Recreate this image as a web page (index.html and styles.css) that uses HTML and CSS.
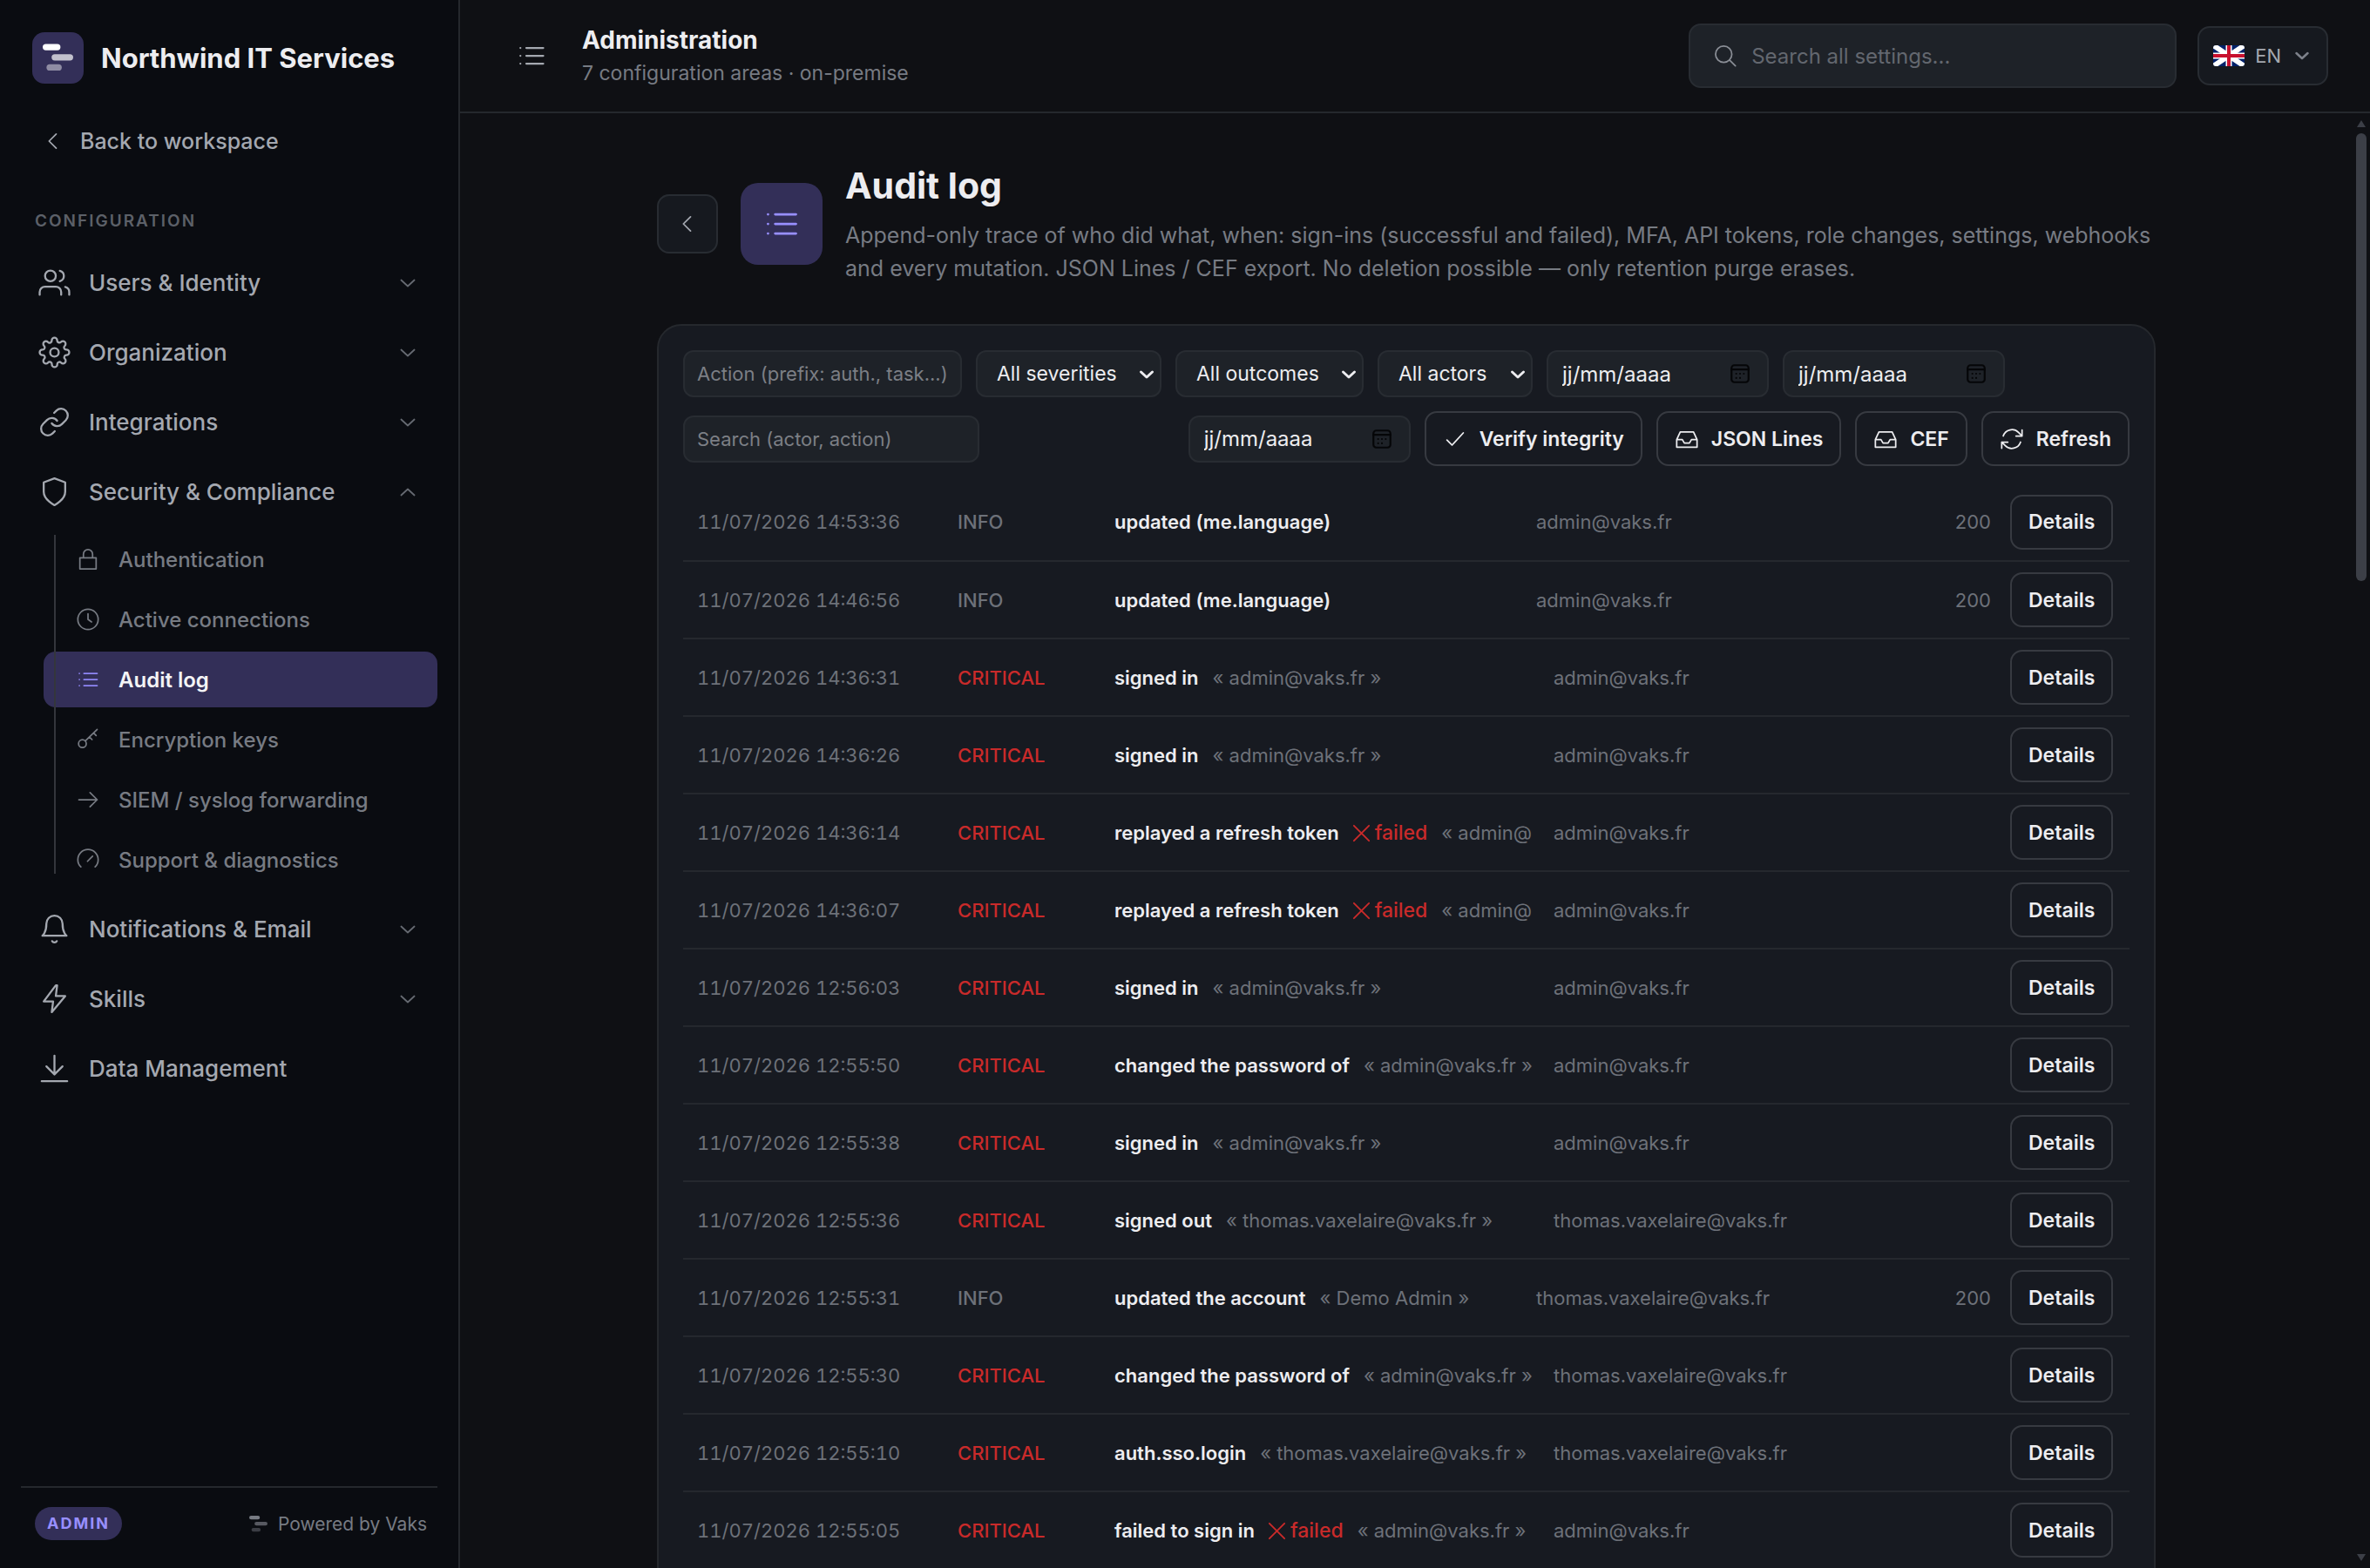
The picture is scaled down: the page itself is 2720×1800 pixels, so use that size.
FILE: index.html
```html
<!DOCTYPE html>
<html lang="en">
<head>
    <meta charset="UTF-8">
    <meta name="viewport" content="width=device-width, initial-scale=1.0">
    <title>Audit log - Administration</title>
    <link rel="stylesheet" href="styles.css">
</head>
<body>
    <!-- icon set -->
    <svg class="sprite" aria-hidden="true">
        <symbol id="i-logo" viewBox="0 0 24 24">
            <rect x="0" y="1" width="14" height="5" rx="2.5" />
            <rect x="7" y="9" width="17" height="5" rx="2.5" opacity=".7" />
            <rect x="3" y="17" width="12" height="5" rx="2.5" opacity=".45" />
        </symbol>
        <symbol id="i-left" viewBox="0 0 24 24"><path d="M15 5l-7 7 7 7" /></symbol>
        <symbol id="i-down" viewBox="0 0 24 24"><path d="M5.500 9l6.500 6 6.500-6" /></symbol>
        <symbol id="i-up" viewBox="0 0 24 24"><path d="M5.500 15l6.500-6 6.500 6" /></symbol>
        <symbol id="i-list" viewBox="0 0 24 24"><path d="M8 6h13M8 12h13M8 18h13M3.500 6h.01M3.500 12h.01M3.500 18h.01" /></symbol>
        <symbol id="i-users" viewBox="0 0 24 24"><path d="M17 21v-2a4 4 0 0 0-4-4H5a4 4 0 0 0-4 4v2M23 21v-2a4 4 0 0 0-3-3.870M16 3.130a4 4 0 0 1 0 7.750" /><circle cx="9" cy="7" r="4" /></symbol>
        <symbol id="i-gear" viewBox="0 0 24 24"><circle cx="12" cy="12" r="3.200" /><path d="M19.400 15a1.650 1.650 0 0 0 .33 1.820l.06.06a2 2 0 1 1-2.830 2.830l-.06-.06a1.650 1.650 0 0 0-2.820 1.170V21a2 2 0 0 1-4 0v-.09A1.650 1.650 0 0 0 7.180 19.700l-.06.06a2 2 0 1 1-2.830-2.830l.06-.06A1.650 1.650 0 0 0 3.090 14H3a2 2 0 0 1 0-4h.09A1.650 1.650 0 0 0 4.300 7.180l-.06-.06a2 2 0 1 1 2.830-2.830l.06.06A1.650 1.650 0 0 0 10 3.090V3a2 2 0 0 1 4 0v.09a1.650 1.650 0 0 0 2.820 1.210l.06-.06a2 2 0 1 1 2.830 2.830l-.06.06A1.650 1.650 0 0 0 20.910 10H21a2 2 0 0 1 0 4h-.09a1.650 1.650 0 0 0-1.510 1z" /></symbol>
        <symbol id="i-link" viewBox="0 0 24 24"><path d="M10 13a5 5 0 0 0 7.540.54l3-3a5 5 0 0 0-7.070-7.070l-1.720 1.710M14 11a5 5 0 0 0-7.540-.54l-3 3a5 5 0 0 0 7.070 7.070l1.710-1.710" /></symbol>
        <symbol id="i-shield" viewBox="0 0 24 24"><path d="M12 22s8-4 8-10V5l-8-3-8 3v7c0 6 8 10 8 10z" /></symbol>
        <symbol id="i-lock" viewBox="0 0 24 24"><path d="M4 10.500h16v11H4zM7.500 10.500V7a4.500 4.500 0 0 1 9 0v3.500" /></symbol>
        <symbol id="i-clock" viewBox="0 0 24 24"><circle cx="12" cy="12" r="10" /><path d="M12 6.500V12l3.500 2.500" /></symbol>
        <symbol id="i-key" viewBox="0 0 24 24"><circle cx="6.500" cy="16" r="3.800" /><path d="M9.300 13.300L21 2M17.500 5.500l2.500 2.500M13.500 9.500l2.500 2.500" /></symbol>
        <symbol id="i-right" viewBox="0 0 24 24"><path d="M3 12h18M14 5l7 7-7 7" /></symbol>
        <symbol id="i-gauge" viewBox="0 0 24 24"><path d="M5 19a10 10 0 1 1 14 0M11.500 13.500l5-5" /></symbol>
        <symbol id="i-bell" viewBox="0 0 24 24"><path d="M18 8A6 6 0 0 0 6 8c0 7-3 9-3 9h18s-3-2-3-9M13.730 21a2 2 0 0 1-3.460 0" /></symbol>
        <symbol id="i-bolt" viewBox="0 0 24 24"><path d="M13 2L4 14h7l-1 8 10-12h-7l1-8z" /></symbol>
        <symbol id="i-download" viewBox="0 0 24 24"><path d="M12 2.500V16M6 10.500l6 6 6-6M2.500 21.500h19" /></symbol>
        <symbol id="i-search" viewBox="0 0 24 24"><circle cx="10.500" cy="10.500" r="8" /><path d="M22 22l-5.800-5.800" /></symbol>
        <symbol id="i-check" viewBox="0 0 24 24"><path d="M4 13l5 5L20 6" /></symbol>
        <symbol id="i-inbox" viewBox="0 0 24 24"><path d="M2 12.500h5.500l2 3.500h5l2-3.500H22M5.500 5h13L22 12.500V20H2v-7.500z" /></symbol>
        <symbol id="i-refresh" viewBox="0 0 24 24"><path d="M22 3v6h-6M2 21v-6h6M3.500 9a9 9 0 0 1 15-3.500L22 9M2 15l3.500 3.500a9 9 0 0 0 15-3.500" /></symbol>
        <symbol id="i-cross" viewBox="0 0 24 24"><path d="M3 3l18 18M21 3L3 21" /></symbol>
        <symbol id="i-calendar" viewBox="0 0 24 24"><rect x="3" y="3" width="18" height="18" rx="3" /><path d="M3 7.500h18M8 12h.01M12 12h.01M16 12h.01M8 16.500h.01M12 16.500h.01" /></symbol>
    </svg>

    <div class="app">
        <aside class="sidebar">
            <div class="brand">
                <span class="brand-logo"><svg><use href="#i-logo" /></svg></span>
                <span>Northwind IT Services</span>
            </div>
            <a class="back-link" href="#"><svg class="icon"><use href="#i-left" /></svg>Back to workspace</a>
            <div class="nav-title">CONFIGURATION</div>
            <nav class="nav">
                <button class="nav-item"><svg class="icon"><use href="#i-users" /></svg>Users &amp; Identity<svg class="icon chevron"><use href="#i-down" /></svg></button>
                <button class="nav-item"><svg class="icon"><use href="#i-gear" /></svg>Organization<svg class="icon chevron"><use href="#i-down" /></svg></button>
                <button class="nav-item"><svg class="icon"><use href="#i-link" /></svg>Integrations<svg class="icon chevron"><use href="#i-down" /></svg></button>
                <button class="nav-item"><svg class="icon"><use href="#i-shield" /></svg>Security &amp; Compliance<svg class="icon chevron"><use href="#i-up" /></svg></button>
                <div class="subnav">
                    <a href="#"><svg class="icon"><use href="#i-lock" /></svg>Authentication</a>
                    <a href="#"><svg class="icon"><use href="#i-clock" /></svg>Active connections</a>
                    <a href="#" class="active"><svg class="icon"><use href="#i-list" /></svg>Audit log</a>
                    <a href="#"><svg class="icon"><use href="#i-key" /></svg>Encryption keys</a>
                    <a href="#"><svg class="icon"><use href="#i-right" /></svg>SIEM / syslog forwarding</a>
                    <a href="#"><svg class="icon"><use href="#i-gauge" /></svg>Support &amp; diagnostics</a>
                </div>
                <button class="nav-item"><svg class="icon"><use href="#i-bell" /></svg>Notifications &amp; Email<svg class="icon chevron"><use href="#i-down" /></svg></button>
                <button class="nav-item"><svg class="icon"><use href="#i-bolt" /></svg>Skills<svg class="icon chevron"><use href="#i-down" /></svg></button>
                <a class="nav-item" href="#"><svg class="icon"><use href="#i-download" /></svg>Data Management</a>
            </nav>
            <div class="sidebar-footer">
                <span class="role">ADMIN</span>
                <span class="powered"><svg><use href="#i-logo" /></svg>Powered by Vaks</span>
            </div>
        </aside>

        <div class="main">
            <header class="topbar">
                <svg class="icon topbar-icon"><use href="#i-list" /></svg>
                <div class="topbar-text">
                    <div class="topbar-title">Administration</div>
                    <div class="topbar-sub">7 configuration areas · on-premise</div>
                </div>
                <label class="search">
                    <svg class="icon"><use href="#i-search" /></svg>
                    <input type="text" placeholder="Search all settings..." aria-label="Search all settings">
                </label>
                <button class="lang">
                    <svg class="flag" viewBox="0 0 36 24">
                        <rect width="36" height="24" fill="#012169" />
                        <path d="M0 0l36 24M36 0L0 24" stroke="#fff" stroke-width="6" />
                        <path d="M18 0v24M0 12h36" stroke="#fff" stroke-width="7" />
                        <path d="M18 0v24M0 12h36" stroke="#c8102e" stroke-width="4" />
                    </svg>
                    EN
                    <svg class="icon"><use href="#i-down" /></svg>
                </button>
            </header>

            <div class="scroll">
                <main class="content">
                    <div class="page-head">
                        <button class="back-btn" aria-label="Back"><svg class="icon"><use href="#i-left" /></svg></button>
                        <span class="page-icon"><svg class="icon"><use href="#i-list" /></svg></span>
                        <div>
                            <h1>Audit log</h1>
                            <p>Append-only trace of who did what, when: sign-ins (successful and failed), MFA, API tokens, role changes, settings, webhooks<br>and every mutation. JSON Lines / CEF export. No deletion possible — only retention purge erases.</p>
                        </div>
                    </div>

                    <section class="card">
                        <div class="filters">
                            <input class="field field-action" type="text" placeholder="Action (prefix: auth., task...)" aria-label="Action">
                            <span class="select select-severity"><select aria-label="Severity"><option>All severities</option></select><svg class="icon"><use href="#i-down" /></svg></span>
                            <span class="select select-outcome"><select aria-label="Outcome"><option>All outcomes</option></select><svg class="icon"><use href="#i-down" /></svg></span>
                            <span class="select select-actor"><select aria-label="Actor"><option>All actors</option></select><svg class="icon"><use href="#i-down" /></svg></span>
                            <label class="date"><input type="text" value="jj/mm/aaaa" aria-label="From"><svg class="icon"><use href="#i-calendar" /></svg></label>
                            <label class="date"><input type="text" value="jj/mm/aaaa" aria-label="To"><svg class="icon"><use href="#i-calendar" /></svg></label>
                            <input class="field field-search" type="text" placeholder="Search (actor, action)" aria-label="Search">
                            <label class="date date-verify"><input type="text" value="jj/mm/aaaa" aria-label="Verify from"><svg class="icon"><use href="#i-calendar" /></svg></label>
                            <button class="btn"><svg class="icon"><use href="#i-check" /></svg>Verify integrity</button>
                            <button class="btn"><svg class="icon"><use href="#i-inbox" /></svg>JSON Lines</button>
                            <button class="btn"><svg class="icon"><use href="#i-inbox" /></svg>CEF</button>
                            <button class="btn"><svg class="icon"><use href="#i-refresh" /></svg>Refresh</button>
                        </div>

                        <table class="log">
                            <colgroup><col class="c-date"><col class="c-level"><col class="c-action"><col><col class="c-status"><col class="c-more"></colgroup>
                            <tbody>
                                <tr class="info"><td>11/07/2026 14:53:36</td><td class="level">INFO</td><td><b>updated (me.language)</b></td><td class="actor">admin@vaks.fr</td><td class="status">200</td><td><button class="btn">Details</button></td></tr>
                                <tr class="info"><td>11/07/2026 14:46:56</td><td class="level">INFO</td><td><b>updated (me.language)</b></td><td class="actor">admin@vaks.fr</td><td class="status">200</td><td><button class="btn">Details</button></td></tr>
                                <tr class="critical"><td>11/07/2026 14:36:31</td><td class="level">CRITICAL</td><td><b>signed in</b><span class="target">« admin@vaks.fr »</span></td><td class="actor">admin@vaks.fr</td><td></td><td><button class="btn">Details</button></td></tr>
                                <tr class="critical"><td>11/07/2026 14:36:26</td><td class="level">CRITICAL</td><td><b>signed in</b><span class="target">« admin@vaks.fr »</span></td><td class="actor">admin@vaks.fr</td><td></td><td><button class="btn">Details</button></td></tr>
                                <tr class="critical"><td>11/07/2026 14:36:14</td><td class="level">CRITICAL</td><td><b>replayed a refresh token</b><span class="failed"><svg class="icon"><use href="#i-cross" /></svg>failed</span><span class="target">« admin@</span></td><td class="actor">admin@vaks.fr</td><td></td><td><button class="btn">Details</button></td></tr>
                                <tr class="critical"><td>11/07/2026 14:36:07</td><td class="level">CRITICAL</td><td><b>replayed a refresh token</b><span class="failed"><svg class="icon"><use href="#i-cross" /></svg>failed</span><span class="target">« admin@</span></td><td class="actor">admin@vaks.fr</td><td></td><td><button class="btn">Details</button></td></tr>
                                <tr class="critical"><td>11/07/2026 12:56:03</td><td class="level">CRITICAL</td><td><b>signed in</b><span class="target">« admin@vaks.fr »</span></td><td class="actor">admin@vaks.fr</td><td></td><td><button class="btn">Details</button></td></tr>
                                <tr class="critical"><td>11/07/2026 12:55:50</td><td class="level">CRITICAL</td><td><b>changed the password of</b><span class="target">« admin@vaks.fr »</span></td><td class="actor">admin@vaks.fr</td><td></td><td><button class="btn">Details</button></td></tr>
                                <tr class="critical"><td>11/07/2026 12:55:38</td><td class="level">CRITICAL</td><td><b>signed in</b><span class="target">« admin@vaks.fr »</span></td><td class="actor">admin@vaks.fr</td><td></td><td><button class="btn">Details</button></td></tr>
                                <tr class="critical"><td>11/07/2026 12:55:36</td><td class="level">CRITICAL</td><td><b>signed out</b><span class="target">« thomas.vaxelaire@vaks.fr »</span></td><td class="actor">thomas.vaxelaire@vaks.fr</td><td></td><td><button class="btn">Details</button></td></tr>
                                <tr class="info"><td>11/07/2026 12:55:31</td><td class="level">INFO</td><td><b>updated the account</b><span class="target">« Demo Admin »</span></td><td class="actor">thomas.vaxelaire@vaks.fr</td><td class="status">200</td><td><button class="btn">Details</button></td></tr>
                                <tr class="critical"><td>11/07/2026 12:55:30</td><td class="level">CRITICAL</td><td><b>changed the password of</b><span class="target">« admin@vaks.fr »</span></td><td class="actor">thomas.vaxelaire@vaks.fr</td><td></td><td><button class="btn">Details</button></td></tr>
                                <tr class="critical"><td>11/07/2026 12:55:10</td><td class="level">CRITICAL</td><td><b>auth.sso.login</b><span class="target">« thomas.vaxelaire@vaks.fr »</span></td><td class="actor">thomas.vaxelaire@vaks.fr</td><td></td><td><button class="btn">Details</button></td></tr>
                                <tr class="critical"><td>11/07/2026 12:55:05</td><td class="level">CRITICAL</td><td><b>failed to sign in</b><span class="failed"><svg class="icon"><use href="#i-cross" /></svg>failed</span><span class="target">« admin@vaks.fr »</span></td><td class="actor">admin@vaks.fr</td><td></td><td><button class="btn">Details</button></td></tr>
                            </tbody>
                        </table>
                    </section>
                </main>
                <div class="scrollbar"><i class="arrow-up"></i><i class="thumb"></i><i class="arrow-down"></i></div>
            </div>
        </div>
    </div>
</body>
</html>
```
FILE: styles.css
```css
* {
    box-sizing: border-box;
}

body {
    margin: 0;
    background-color: #0f1014;
    color: #ededf0;
    font-family: Inter, "Liberation Sans", sans-serif;
    font-size: 22px;
}

button, input, select {
    font: inherit;
    color: inherit;
}

button {
    cursor: pointer;
}

a {
    color: inherit;
    text-decoration: none;
}

.sprite {
    display: none;
}

.icon {
    flex: none;
    width: 28px;
    height: 28px;
    fill: none;
    stroke: currentColor;
    stroke-width: 1.5;
    stroke-linecap: round;
    stroke-linejoin: round;
}

.app {
    display: flex;
    height: 100vh;
    overflow: hidden;
}

/* sidebar */
.sidebar {
    display: flex;
    flex-direction: column;
    flex: none;
    width: 528px;
    padding: 36px 24px 24px;
    background-color: #0a0c11;
    border-right: 2px solid #25282d;
    color: #a4a8b0;
}

.brand {
    display: flex;
    align-items: center;
    gap: 20px;
    height: 60px;
    padding-left: 13px;
    color: #ededf0;
    font-size: 31px;
    font-weight: 700;
}

.brand-logo {
    display: flex;
    align-items: center;
    justify-content: center;
    width: 59px;
    height: 59px;
    border-radius: 14px;
    background-color: #332f58;
}

.brand-logo svg {
    width: 35px;
    height: 35px;
    fill: #fff;
}

.back-link {
    display: flex;
    align-items: center;
    gap: 17px;
    height: 64px;
    margin-top: 34px;
    padding-left: 23px;
    font-size: 25px;
    font-weight: 500;
}

.nav-title {
    margin: 46px 0 19px;
    padding-left: 16px;
    color: #5c6068;
    font-size: 19px;
    font-weight: 600;
    line-height: 28px;
    letter-spacing: 2px;
}

.nav {
    display: flex;
    flex-direction: column;
    flex: 1;
    gap: 5px;
}

.nav-item {
    display: flex;
    align-items: center;
    gap: 21px;
    height: 75px;
    padding: 0 20px;
    border: 0;
    background: none;
    font-size: 26px;
    font-weight: 500;
    text-align: left;
}

.nav-item .icon {
    width: 37px;
    height: 37px;
}

.nav-item .chevron {
    width: 28px;
    height: 28px;
    margin-left: auto;
    color: #666a72;
}

.subnav {
    position: relative;
    display: flex;
    flex-direction: column;
    gap: 5px;
    margin: 3px 0 5px 26px;
    color: #777b83;
}

.subnav::before {
    content: "";
    position: absolute;
    top: 4px;
    bottom: 16px;
    left: 12px;
    width: 2px;
    background-color: #34363c;
}

.subnav a {
    display: flex;
    align-items: center;
    gap: 21px;
    height: 64px;
    padding-left: 37px;
    border-radius: 14px;
    font-size: 24px;
    font-weight: 500;
}

.subnav .active {
    background-color: #332f58;
    color: #f4f4f6;
    font-weight: 600;
}

.subnav .active .icon {
    color: #8f86f5;
}

.sidebar-footer {
    display: flex;
    align-items: center;
    justify-content: space-between;
    height: 70px;
    padding: 14px 12px 0 16px;
    border-top: 2px solid #25282d;
    color: #777b83;
}

.role {
    padding: 0 14px;
    border-radius: 19px;
    background-color: #332f58;
    color: #988fff;
    font-size: 18px;
    font-weight: 700;
    line-height: 38px;
    letter-spacing: 2px;
}

.powered {
    display: flex;
    align-items: center;
    gap: 12px;
    font-size: 21px;
}

.powered svg {
    width: 21px;
    height: 21px;
    fill: currentColor;
}

/* top bar */
.main {
    display: flex;
    flex-direction: column;
    flex: 1;
    min-width: 0;
}

.topbar {
    display: flex;
    align-items: center;
    height: 130px;
    padding: 0 48px 0 64px;
    border-bottom: 2px solid #25282d;
}

.topbar-icon {
    width: 36px;
    height: 36px;
    color: #a4a8b0;
}

.topbar-text {
    flex: 1;
    margin-left: 40px;
}

.topbar-title {
    font-size: 28px;
    font-weight: 700;
    line-height: 40px;
}

.topbar-sub {
    color: #777b83;
    font-size: 23px;
    line-height: 36px;
}

.search {
    display: flex;
    align-items: center;
    gap: 16px;
    width: 560px;
    height: 74px;
    padding: 0 26px;
    border: 2px solid #282c32;
    border-radius: 14px;
    background-color: #1e2228;
    color: #8a8e96;
}

.search input {
    flex: 1;
    min-width: 0;
    padding: 0;
    border: 0;
    outline: 0;
    background: none;
    font-size: 24px;
}

::placeholder {
    color: #7c7f85;
    opacity: 1;
}

.search input::placeholder {
    color: #63676f;
}

.lang {
    display: flex;
    align-items: center;
    gap: 12px;
    height: 68px;
    margin-left: 24px;
    padding: 0 16px;
    border: 2px solid #282c32;
    border-radius: 14px;
    background-color: #16191f;
    color: #a4a8b0;
}

.lang .icon {
    width: 24px;
    height: 24px;
    stroke-width: 2.5;
    color: #7d818a;
}

.flag {
    width: 36px;
    height: 24px;
    border-radius: 3px;
}

/* page */
.scroll {
    display: flex;
    flex: 1;
    min-height: 0;
}

.content {
    flex: 1;
    max-width: 1720px;
    margin: 0 auto;
    padding-top: 56px;
}

.page-head {
    display: flex;
    align-items: center;
    gap: 26px;
    margin-bottom: 45px;
}

.back-btn {
    display: flex;
    align-items: center;
    justify-content: center;
    flex: none;
    width: 70px;
    height: 68px;
    padding: 0;
    border: 2px solid #282c32;
    border-radius: 14px;
    background-color: #16191f;
    color: #a4a8b0;
}

.page-icon {
    display: flex;
    align-items: center;
    justify-content: center;
    flex: none;
    width: 94px;
    height: 94px;
    border-radius: 20px;
    background-color: #332f58;
    color: #988fff;
}

.page-icon .icon {
    width: 44px;
    height: 44px;
}

h1 {
    margin: 0 0 11px;
    font-size: 41px;
    font-weight: 700;
    line-height: 54px;
}

.page-head p {
    margin: 0;
    color: #777b83;
    font-size: 25px;
    line-height: 38px;
    white-space: nowrap;
}

.card {
    padding: 28px;
    border: 2px solid #25282d;
    border-radius: 28px;
    background-color: #171a21;
}

.filters {
    display: flex;
    flex-wrap: wrap;
    align-items: center;
    gap: 16px;
    margin-bottom: 20px;
}

.field, .select select, .date {
    height: 54px;
    border: 2px solid #282c32;
    border-radius: 12px;
    background-color: #1e2228;
}

.field {
    padding: 0 14px;
}

.field-action {
    width: 320px;
}

.field-search {
    width: 340px;
}

.select {
    position: relative;
}

.select select {
    width: 100%;
    padding: 0 22px;
    appearance: none;
    font-size: 23px;
}

.select .icon {
    position: absolute;
    top: 16px;
    right: 5px;
    width: 24px;
    height: 24px;
    stroke-width: 3;
    pointer-events: none;
}

.select-severity {
    width: 213px;
}

.select-outcome {
    width: 216px;
}

.select-actor {
    width: 178px;
}

.date {
    display: flex;
    align-items: center;
    justify-content: space-between;
    width: 255px;
    padding: 0 18px 0 16px;
}

.date input {
    width: 160px;
    padding: 0;
    border: 0;
    outline: 0;
    background: none;
    font-size: 24px;
}

.date .icon {
    width: 26px;
    height: 26px;
    stroke: #050608;
    stroke-width: 2;
}

.date-verify {
    margin-left: auto;
}

.btn {
    display: flex;
    align-items: center;
    gap: 14px;
    height: 63px;
    padding: 0 19px;
    border: 2px solid #373a41;
    border-radius: 14px;
    background: none;
    color: #ededf0;
    font-size: 23px;
    font-weight: 600;
}

/* log table */
.log {
    width: 100%;
    border-collapse: collapse;
    table-layout: fixed;
}

.c-date {
    width: 315px;
}

.c-level {
    width: 180px;
}

.c-action {
    width: 484px;
}

.c-status {
    width: 80px;
}

.c-more {
    width: 137px;
}

.log td {
    height: 89px;
    padding: 0;
    border-bottom: 2px solid #25282e;
    color: #6d7179;
    white-space: nowrap;
}

.log td:first-child {
    padding-left: 16px;
    font-variant-numeric: tabular-nums;
}

.log b {
    color: #ededf0;
    font-weight: 600;
}

.level {
    font-weight: 500;
}

.log .critical .level, .failed {
    color: #c92a2a;
}

.critical .actor {
    padding-left: 20px;
}

.log .status {
    padding-right: 22px;
    text-align: right;
}

.target {
    margin-left: 16px;
}

.failed {
    margin-left: 14px;
    font-size: 23px;
    font-weight: 500;
}

.failed .icon {
    width: 23px;
    height: 23px;
    margin-right: 4px;
    vertical-align: -4px;
    stroke-width: 2;
}

/* scrollbar */
.scrollbar {
    display: flex;
    flex-direction: column;
    align-items: center;
    flex: none;
    width: 20px;
    padding: 8px 0;
}

.thumb {
    width: 12px;
    height: 514px;
    margin: 7px 0 auto;
    border-radius: 6px;
    background-color: #3c3f47;
}

.arrow-up, .arrow-down {
    border: 5px solid transparent;
}

.arrow-up {
    border-top: 0;
    border-bottom: 8px solid #3c3f47;
}

.arrow-down {
    border-bottom: 0;
    border-top: 8px solid #3c3f47;
}
```
